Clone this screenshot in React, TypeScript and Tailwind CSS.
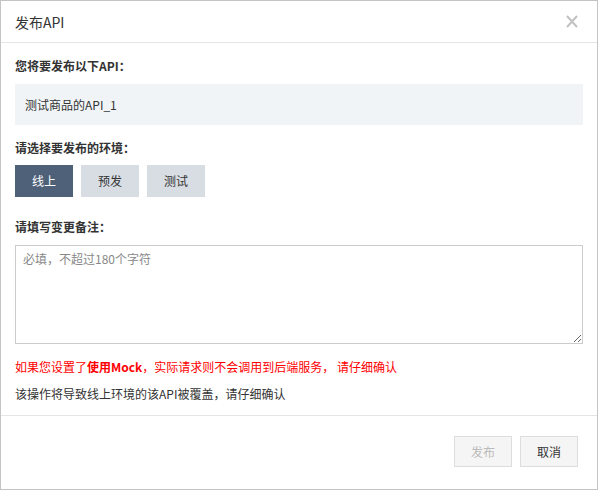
import React, { useState } from "react";

const envs = ["线上", "预发", "测试"];

const App = () => {
  const [env, setEnv] = useState("线上");
  const [remark, setRemark] = useState("");

  return (
    <div className="w-[598px] h-[490px] bg-white border border-[#c4c4c4] flex flex-col text-[#333] font-['Noto_Sans_CJK_SC',sans-serif]">
      <div className="h-[42px] shrink-0 border-b border-[#e5e5e5] flex items-center justify-between pl-[14px] pr-[19px]">
        <span className="text-[14px] leading-[20px]">发布API</span>
        <svg width="12" height="13" viewBox="0 0 12 13" className="text-[#c2c2c2]">
          <path d="M1 1L11 12M11 1L1 12" stroke="currentColor" strokeWidth="2" fill="none" />
        </svg>
      </div>

      <div className="flex-1 flex flex-col px-[14px] pt-[13px] text-[12px] leading-[20px]">
        <div className="font-bold">您将要发布以下API：</div>
        <div className="mt-[8px] h-[41px] bg-[#f0f4f7] flex items-center pl-[10px]">
          测试商品的API_1
        </div>

        <div className="mt-[13px] font-bold">请选择要发布的环境：</div>
        <div className="mt-[7px] flex gap-2">
          {envs.map((e) => (
            <button
              key={e}
              onClick={() => setEnv(e)}
              className={
                env === e
                  ? "w-[58px] h-[32px] bg-[#4f6079] text-white text-[12px]"
                  : "w-[58px] h-[32px] bg-[#d8dde3] text-[#333] text-[12px]"
              }
            >
              {e}
            </button>
          ))}
        </div>

        <div className="mt-[20px] font-bold">请填写变更备注：</div>
        <textarea
          value={remark}
          onChange={(e) => setRemark(e.target.value)}
          placeholder="必填，不超过180个字符"
          className="mt-[8px] h-[99px] w-full border border-[#cccccc] px-[7px] py-[5px] text-[12px] leading-[16px] outline-none placeholder:text-[#888]"
        />

        <div className="mt-[13px] text-[#ff0000]">
          如果您设置了<span className="font-bold">使用Mock</span>，实际请求则不会调用到后端服务， 请仔细确认
        </div>
        <div className="mt-[7px]">该操作将导致线上环境的该API被覆盖，请仔细确认</div>
      </div>

      <div className="h-[74px] shrink-0 border-t border-[#e5e5e5] flex justify-end items-start gap-2 pt-[20px] pr-[19px]">
        <button
          disabled
          className="w-[58px] h-[31px] bg-[#f5f5f5] border border-[#dddddd] text-[#bbbbbb] text-[12px]"
        >
          发布
        </button>
        <button className="w-[58px] h-[31px] bg-[#f5f5f5] border border-[#dddddd] text-[#333] text-[12px]">
          取消
        </button>
      </div>
    </div>
  );
};

export default App;
